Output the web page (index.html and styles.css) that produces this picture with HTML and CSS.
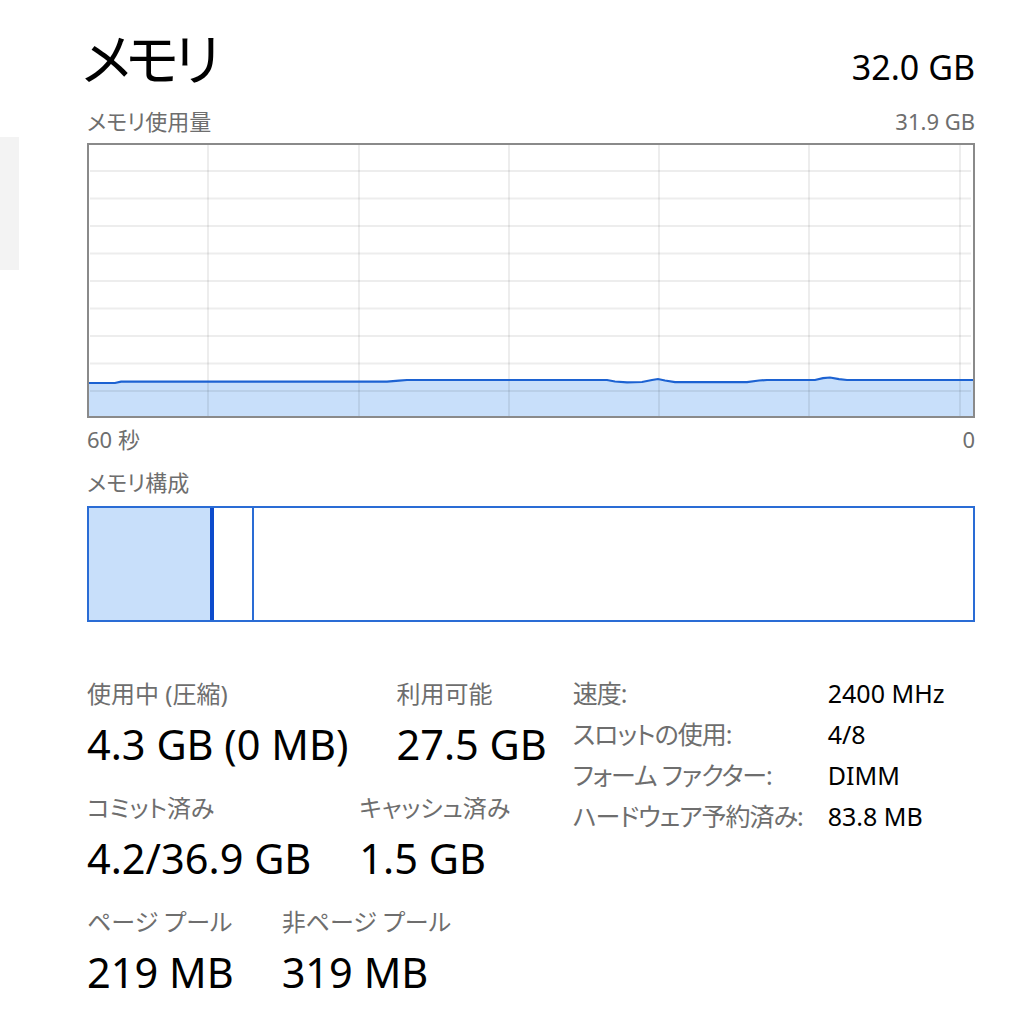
FILE: index.html
```html
<!DOCTYPE html>
<html lang="ja">
<head>
    <meta charset="UTF-8">
    <meta name="viewport" content="width=device-width, initial-scale=1.0">
    <title>メモリ</title>
    <link rel="stylesheet" href="styles.css">
</head>
<body>

<div class="page">
    <!-- Sidebar (cut off at the left edge) -->
    <div class="sidebar">
        <div class="sidebar-item"></div>
    </div>

    <div class="main">
        <div class="header">
            <h1 class="title">メモリ</h1>
            <div class="total">32.0 GB</div>
        </div>

        <div class="chart-label">
            <span>メモリ使用量</span>
            <span>31.9 GB</span>
        </div>

        <!-- Memory usage graph -->
        <svg class="chart" width="888" height="275" viewBox="0 0 888 275">
            <polygon class="chart-fill" points="1,240 28,240 34,238.7 300,238.7 312,237.6 320,237 520,237 528,238.5 540,239.3 555,239 565,237 571,236 578,237.5 588,239.2 660,239.2 672,237.5 680,237 728,237 736,235.2 743,234.5 752,236.2 760,237 887,237 887,274 1,274"/>
            <g class="chart-grid">
                <line x1="3" y1="28" x2="884" y2="28"/>
                <line x1="3" y1="55.5" x2="884" y2="55.5"/>
                <line x1="3" y1="83" x2="884" y2="83"/>
                <line x1="3" y1="110.5" x2="884" y2="110.5"/>
                <line x1="3" y1="138" x2="884" y2="138"/>
                <line x1="3" y1="165.5" x2="884" y2="165.5"/>
                <line x1="3" y1="193" x2="884" y2="193"/>
                <line x1="3" y1="220.5" x2="884" y2="220.5"/>
                <line x1="3" y1="248" x2="884" y2="248"/>
                <line x1="121" y1="2" x2="121" y2="273"/>
                <line x1="272" y1="2" x2="272" y2="273"/>
                <line x1="422" y1="2" x2="422" y2="273"/>
                <line x1="572" y1="2" x2="572" y2="273"/>
                <line x1="722" y1="2" x2="722" y2="273"/>
                <line x1="873" y1="2" x2="873" y2="273"/>
            </g>
            <polyline class="chart-line" points="1,240 28,240 34,238.7 300,238.7 312,237.6 320,237 520,237 528,238.5 540,239.3 555,239 565,237 571,236 578,237.5 588,239.2 660,239.2 672,237.5 680,237 728,237 736,235.2 743,234.5 752,236.2 760,237 887,237"/>
            <rect class="chart-border" x="1" y="1" width="886" height="273"/>
        </svg>

        <div class="axis">
            <span>60 秒</span>
            <span>0</span>
        </div>

        <div class="chart-label composition-label">メモリ構成</div>

        <!-- Memory composition bar -->
        <div class="composition">
            <div class="seg seg-used"></div>
            <div class="seg seg-modified"></div>
            <div class="seg seg-free"></div>
        </div>

        <div class="stats">
            <div class="stats-left">
                <div class="stat-row">
                    <div class="stat">
                        <div class="stat-label">使用中 (圧縮)</div>
                        <div class="stat-value">4.3 GB (0 MB)</div>
                    </div>
                    <div class="stat">
                        <div class="stat-label">利用可能</div>
                        <div class="stat-value">27.5 GB</div>
                    </div>
                </div>
                <div class="stat-row">
                    <div class="stat">
                        <div class="stat-label">コミット済み</div>
                        <div class="stat-value">4.2/36.9 GB</div>
                    </div>
                    <div class="stat">
                        <div class="stat-label">キャッシュ済み</div>
                        <div class="stat-value">1.5 GB</div>
                    </div>
                </div>
                <div class="stat-row">
                    <div class="stat">
                        <div class="stat-label">ページ プール</div>
                        <div class="stat-value">219 MB</div>
                    </div>
                    <div class="stat">
                        <div class="stat-label">非ページ プール</div>
                        <div class="stat-value">319 MB</div>
                    </div>
                </div>
            </div>

            <div class="stats-right">
                <div class="info-label">速度:</div>
                <div class="info-value">2400 MHz</div>
                <div class="info-label">スロットの使用:</div>
                <div class="info-value">4/8</div>
                <div class="info-label">フォーム ファクター:</div>
                <div class="info-value">DIMM</div>
                <div class="info-label">ハードウェア予約済み:</div>
                <div class="info-value">83.8 MB</div>
            </div>
        </div>
    </div>
</div>

</body>
</html>
```

FILE: styles.css
```css
:root {
    --text-main: #000000;
    --text-muted: #6e6e6e;
    --chart-border: #8a8a8a;
    --chart-line: #1c62d2;
    --chart-fill: #c8dffa;
    --bar-border: #2a6cd5;
    --bar-split: #0d4bcc;
}

body {
    margin: 0;
    background-color: #ffffff;
    color: var(--text-main);
    font-family: "Noto Sans", "Noto Sans CJK JP", sans-serif;
    font-feature-settings: "palt";
}

.page {
    display: flex;
}

.sidebar {
    width: 19px;
}

.sidebar-item {
    margin-top: 137px;
    height: 133px;
    background-color: #f3f3f3;
}

.main {
    width: 888px;
    margin-left: 68px;
    padding-top: 26px;
}

/* Header */
.header {
    display: flex;
    justify-content: space-between;
    align-items: baseline;
}

.title {
    margin: 0 0 0 -5px;
    font-size: 56px;
    font-weight: normal;
    line-height: 64px;
    letter-spacing: -5px;
}

.total {
    font-size: 34px;
    line-height: 40px;
}

/* Graph labels */
.chart-label {
    display: flex;
    justify-content: space-between;
    margin-top: 18px;
    font-size: 22px;
    line-height: 26px;
    color: var(--text-muted);
}

.chart {
    display: block;
    margin-top: 9px;
}

.chart-fill {
    fill: var(--chart-fill);
}

.chart-grid line {
    stroke: rgba(0, 0, 0, 0.07);
    stroke-width: 2;
}

.chart-line {
    fill: none;
    stroke: var(--chart-line);
    stroke-width: 2.2;
}

.chart-border {
    fill: none;
    stroke: var(--chart-border);
    stroke-width: 2;
}

.axis {
    display: flex;
    justify-content: space-between;
    margin-top: 8px;
    font-size: 22px;
    line-height: 26px;
    color: var(--text-muted);
}

.composition-label {
    margin-top: 17px;
}

/* Composition bar */
.composition {
    display: flex;
    box-sizing: border-box;
    height: 116px;
    margin-top: 11px;
    border: 2px solid var(--bar-border);
}

.seg-used {
    width: 121px;
    background-color: var(--chart-fill);
    border-right: 4px solid var(--bar-split);
}

.seg-modified {
    width: 38px;
    border-right: 2px solid var(--bar-border);
}

.seg-free {
    flex: 1;
}

/* Stats */
.stats {
    display: flex;
    gap: 26px;
    margin-top: 51px;
}

.stat-row {
    display: flex;
    gap: 48px;
    margin-bottom: 18px;
}

.stat-label {
    font-size: 24px;
    line-height: 42px;
    color: var(--text-muted);
    white-space: nowrap;
}

.stat-value {
    margin-top: 4px;
    font-size: 41.5px;
    line-height: 50px;
    white-space: nowrap;
}

.stats-right {
    display: grid;
    grid-template-columns: 255px auto;
    grid-auto-rows: 41px;
    align-content: start;
    font-size: 25px;
    line-height: 41px;
    white-space: nowrap;
}

.info-label {
    color: var(--text-muted);
    letter-spacing: -1px;
}

.info-value {
    color: var(--text-main);
}
```
